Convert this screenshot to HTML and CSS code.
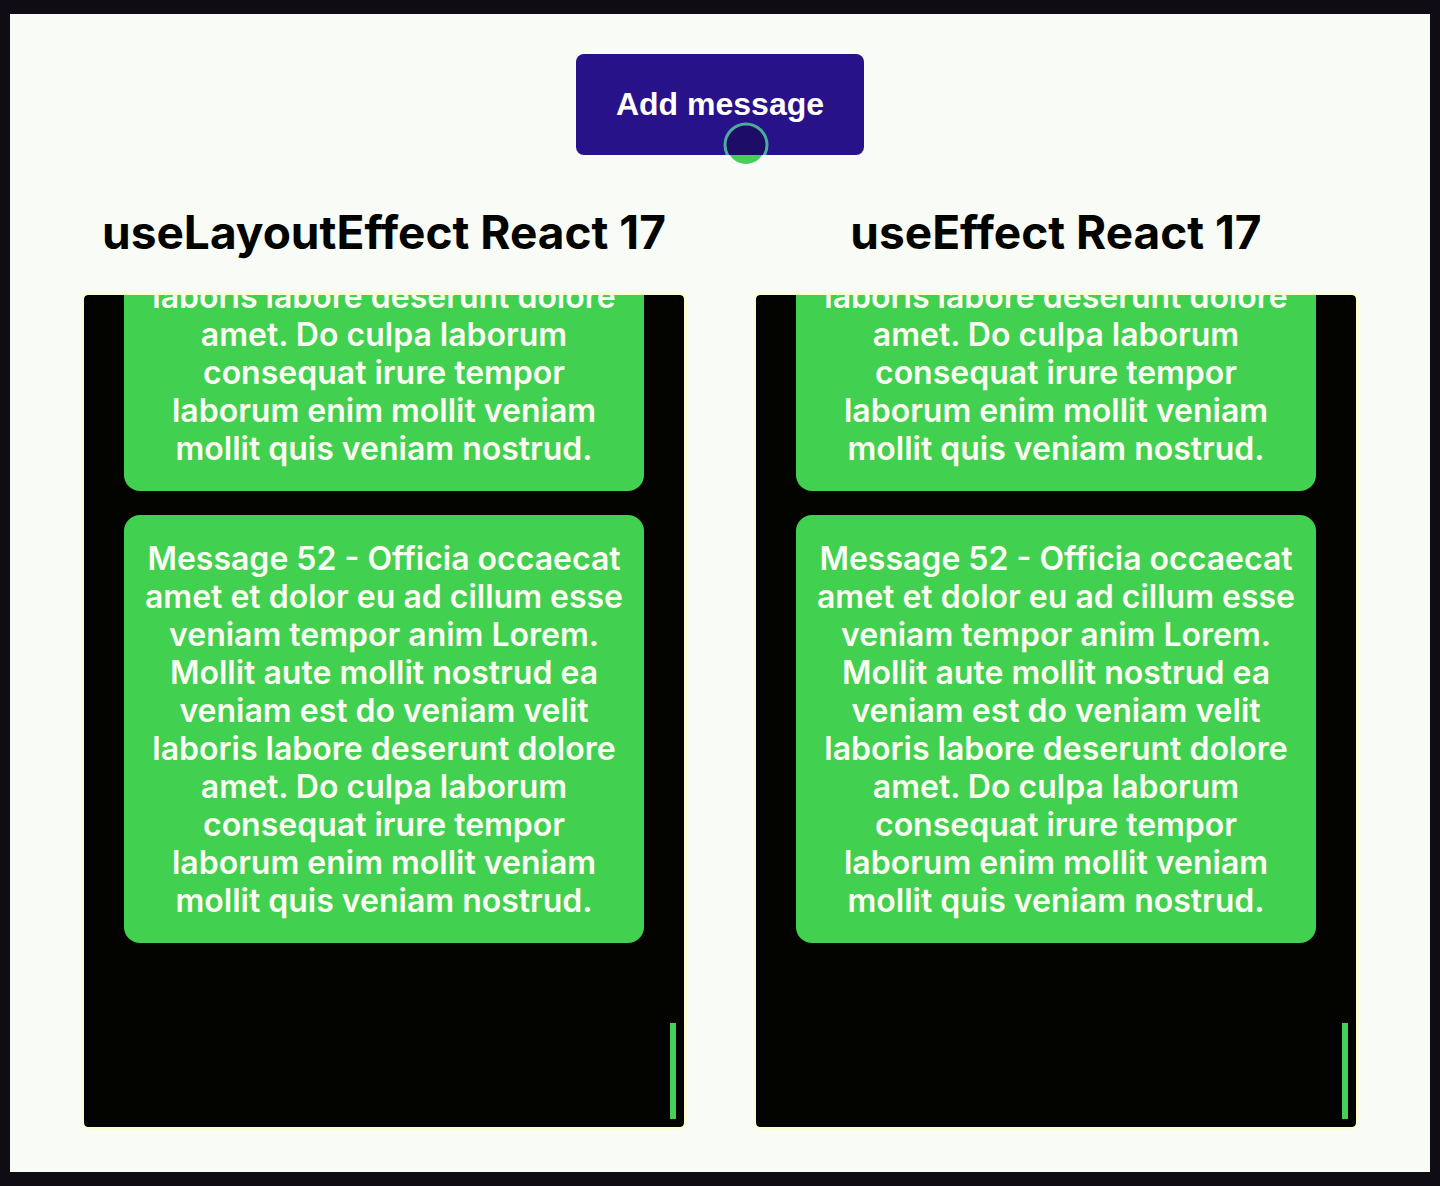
FILE: index.html
```html
<!DOCTYPE html>
<html lang="en">
<head>
<meta charset="utf-8">
<title>useLayoutEffect and useEffect in React 17</title>
<meta name="viewport" content="width=device-width, initial-scale=1">
<link rel="stylesheet" href="styles.css">
</head>
<body>
<main class="page">
  <div class="toolbar">
    <button class="add-button" type="button">Add message</button>
    <svg class="pointer" viewBox="0 0 46 46" aria-hidden="true">
      <clipPath id="over-button"><rect width="46" height="33"/></clipPath>
      <circle cx="23" cy="23" r="19" fill="#46cf58"/>
      <g clip-path="url(#over-button)">
        <circle cx="23" cy="23" r="21" fill="#1d0d66" stroke="#4aad9c" stroke-width="3"/>
      </g>
    </svg>
  </div>
  <div class="columns">
    <section class="column">
      <h1 class="title">useLayoutEffect React 17</h1>
      <div class="chat">
        <div class="messages">
          <p class="message">Message 51 - Officia occaecat amet et dolor eu ad cillum esse veniam tempor anim Lorem. Mollit aute mollit nostrud ea veniam est do veniam velit laboris labore deserunt dolore amet. Do culpa laborum consequat irure tempor laborum enim mollit veniam mollit quis veniam nostrud.</p>
          <p class="message">Message 52 - Officia occaecat amet et dolor eu ad cillum esse veniam tempor anim Lorem. Mollit aute mollit nostrud ea veniam est do veniam velit laboris labore deserunt dolore amet. Do culpa laborum consequat irure tempor laborum enim mollit veniam mollit quis veniam nostrud.</p>
        </div>
        <div class="thumb"></div>
      </div>
    </section>
    <section class="column">
      <h1 class="title">useEffect React 17</h1>
      <div class="chat">
        <div class="messages">
          <p class="message">Message 51 - Officia occaecat amet et dolor eu ad cillum esse veniam tempor anim Lorem. Mollit aute mollit nostrud ea veniam est do veniam velit laboris labore deserunt dolore amet. Do culpa laborum consequat irure tempor laborum enim mollit veniam mollit quis veniam nostrud.</p>
          <p class="message">Message 52 - Officia occaecat amet et dolor eu ad cillum esse veniam tempor anim Lorem. Mollit aute mollit nostrud ea veniam est do veniam velit laboris labore deserunt dolore amet. Do culpa laborum consequat irure tempor laborum enim mollit veniam mollit quis veniam nostrud.</p>
        </div>
        <div class="thumb"></div>
      </div>
    </section>
  </div>
</main>
</body>
</html>
```
FILE: styles.css
```css
* {
  box-sizing: border-box;
}

body {
  margin: 0;
  background: #f9fbf6;
  color: #030300;
  font-family: Inter, "Liberation Sans", sans-serif;
}

.page {
  min-height: 100vh;
  padding: 40px 74px 45px;
  border: solid #0f0c14;
  border-width: 14px 10px;
  display: flex;
  flex-direction: column;
  gap: 48px;
}

.toolbar {
  position: relative;
  align-self: center;
}

.add-button {
  display: block;
  padding: 32px 40px;
  border: 0;
  border-radius: 8px;
  background: #281289;
  color: #fff;
  font: bold 32px/37px "Liberation Sans", Arial, sans-serif;
}

.pointer {
  position: absolute;
  left: 147px;
  top: 68px;
  width: 46px;
  height: 46px;
}

.columns {
  display: grid;
  grid-template-columns: 1fr 1fr;
  gap: 72px;
}

.column {
  display: flex;
  flex-direction: column;
  gap: 34px;
}

.title {
  margin: 0;
  font-size: 46px;
  line-height: 58px;
  font-weight: 700;
  text-align: center;
  white-space: nowrap;
}

.chat {
  position: relative;
  height: 832px;
  padding: 0 40px 184px;
  border-radius: 4px;
  outline: 3px solid #fbfdd5;
  overflow: hidden;
  background: #030300;
  display: flex;
  flex-direction: column;
  justify-content: flex-end;
}

.messages {
  display: flex;
  flex-direction: column;
  gap: 24px;
}

.message {
  margin: 0;
  padding: 25px 20px 23px;
  border-radius: 16px;
  background: #42d051;
  color: #fbfdf2;
  font-size: 32px;
  line-height: 38px;
  font-weight: 600;
  text-align: center;
}

.thumb {
  position: absolute;
  right: 8px;
  bottom: 8px;
  width: 6px;
  height: 96px;
  background: #46d058;
}
```
